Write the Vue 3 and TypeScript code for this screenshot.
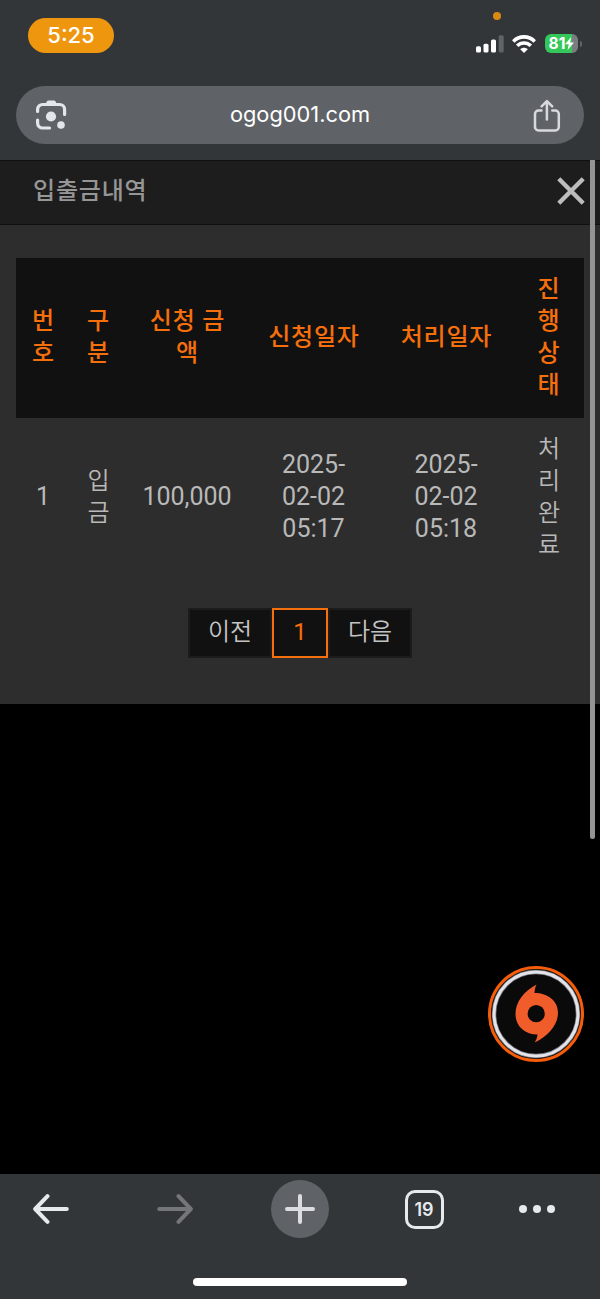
<script setup lang="ts">
interface Cell {
  lines: string[]
  hangul?: boolean
}

const columns: Cell[] = [
  { lines: ['번', '호'] },
  { lines: ['구', '분'] },
  { lines: ['신청 금', '액'] },
  { lines: ['신청일자'] },
  { lines: ['처리일자'] },
  { lines: ['진', '행', '상', '태'] },
]

const rows: Cell[][] = [
  [
    { lines: ['1'] },
    { lines: ['입', '금'], hangul: true },
    { lines: ['100,000'] },
    { lines: ['2025-', '02-02', '05:17'] },
    { lines: ['2025-', '02-02', '05:18'] },
    { lines: ['처', '리', '완', '료'], hangul: true },
  ],
]

const openTabs = 19
</script>

<template>
  <div class="screen">
    <header class="browser-top">
      <div class="status">
        <div class="clock">5:25</div>
        <span class="mic-dot"></span>
        <div class="status-icons">
          <svg class="signal" width="28" height="18" viewBox="0 0 28 18">
            <rect x="0" y="11.3" width="5" height="6.2" rx="1.6" fill="#fff" />
            <rect x="7.5" y="8.7" width="5" height="8.8" rx="1.6" fill="#fff" />
            <rect x="15" y="4.5" width="5" height="13" rx="1.6" fill="#fff" />
            <rect x="22.7" y="0.2" width="5" height="17.3" rx="1.6" fill="#616466" />
          </svg>
          <svg class="wifi" width="24" height="18" viewBox="0 0 24 18">
            <g fill="none" stroke="#fff" stroke-width="3.6">
              <path d="M1.3 6.4C7.3.4 16.7.4 22.7 6.4" />
              <path d="M5.2 10.8C9 7 15 7 18.8 10.8" />
            </g>
            <path d="M12 18l-3.8-3.8c2.1-2 5.5-2 7.6 0z" fill="#fff" />
          </svg>
          <div class="battery">
            <span class="battery-level">81</span>
            <svg width="9" height="13" viewBox="0 0 9 13">
              <path d="M6.2 0L0 7.3h3.7L2.6 13 9 5.5H5.2z" fill="#fff" />
            </svg>
          </div>
          <span class="battery-cap"></span>
        </div>
      </div>
      <div class="address">
        <svg class="lens" width="32" height="32" viewBox="0 0 32 32">
          <g fill="none" stroke="#e3e6ea" stroke-width="3.2" stroke-linecap="round">
            <path d="M2.6 12.4V10.5a5 5 0 0 1 5-5h17a5 5 0 0 1 5 5v5" />
            <path d="M2.6 21v3a5 5 0 0 0 5 5h7" />
          </g>
          <path d="M10 6l1.8-3.4a2 2 0 0 1 1.8-1.1h5.2a2 2 0 0 1 1.8 1.1L22.2 6z" fill="#e3e6ea" />
          <circle cx="16" cy="17.5" r="5.1" fill="#e3e6ea" />
          <circle cx="26" cy="26" r="3.8" fill="#e3e6ea" />
        </svg>
        <span class="url">ogog001.com</span>
        <svg class="share" width="28" height="34" viewBox="0 0 28 34">
          <g fill="none" stroke="#d8d9de" stroke-width="2.5" stroke-linecap="round" stroke-linejoin="round">
            <path d="M8.5 11.5H5.5a3.5 3.5 0 0 0-3.5 3.5v13a3.5 3.5 0 0 0 3.5 3.5h16.8a3.5 3.5 0 0 0 3.5-3.5V15a3.5 3.5 0 0 0-3.5-3.5h-3" />
            <path d="M13.9 20.5V2.5M8.6 7.4l5.3-5.3 5.3 5.3" />
          </g>
        </svg>
      </div>
    </header>

    <main class="page">
      <section class="panel">
        <div class="panel-head">
          <h1>입출금내역</h1>
          <svg class="close" width="28" height="28" viewBox="0 0 28 28">
            <path d="M1.8 1.8l24.4 24.4M26.2 1.8L1.8 26.2" stroke="#bdbdbd" stroke-width="4.4" />
          </svg>
        </div>
        <div class="panel-body">
          <table>
            <colgroup>
              <col class="c-no" />
              <col class="c-kind" />
              <col class="c-amount" />
              <col class="c-asked" />
              <col class="c-done" />
              <col class="c-state" />
            </colgroup>
            <thead>
              <tr>
                <th v-for="(col, i) in columns" :key="i">
                  <span v-for="(line, j) in col.lines" :key="j" class="line">{{ line }}</span>
                </th>
              </tr>
            </thead>
            <tbody>
              <tr v-for="(row, r) in rows" :key="r">
                <td v-for="(cell, i) in row" :key="i" :class="{ hangul: cell.hangul }">
                  <span v-for="(line, j) in cell.lines" :key="j" class="line">{{ line }}</span>
                </td>
              </tr>
            </tbody>
          </table>
          <nav class="pager">
            <a class="page-link prev">이전</a>
            <a class="page-link current">1</a>
            <a class="page-link next">다음</a>
          </nav>
        </div>
      </section>
      <div class="scrollbar"></div>
      <div class="float-button">
        <svg width="96" height="96" viewBox="0 0 96 96">
          <circle cx="48" cy="48" r="46.5" fill="#0a0a0b" stroke="#f55d0a" stroke-width="3" />
          <circle cx="48" cy="48" r="42" fill="none" stroke="#77777f" stroke-width="4.5" />
          <circle cx="48" cy="48" r="42" fill="none" stroke="#e3e3ea" stroke-width="3" />
          <path d="M48.5 18.5C36 25 27.5 36 27.5 48c0 12 9 20.5 22 20.5-.2 3-1.2 5.500-2.800 8C60 70 70 59.500 70 46.500 70 35 60 27 46.500 27c.2-3 .7-6 2-8.500z" fill="#f15d2a" />
          <circle cx="48.2" cy="47.7" r="8.6" fill="#0a0a0b" />
        </svg>
      </div>
    </main>

    <footer class="toolbar">
      <div class="tools">
        <div class="tool">
          <svg width="36" height="30" viewBox="0 0 36 30">
            <path d="M33.8 15H2.5M14.5 2.2L2.2 15l12.3 12.8" fill="none" stroke="#e6e9ed" stroke-width="4" stroke-linecap="round" stroke-linejoin="round" />
          </svg>
        </div>
        <div class="tool">
          <svg width="36" height="30" viewBox="0 0 36 30">
            <path d="M2.2 15h31.3M21.5 2.2L33.8 15 21.5 27.8" fill="none" stroke="#747677" stroke-width="4" stroke-linecap="round" stroke-linejoin="round" />
          </svg>
        </div>
        <div class="tool">
          <div class="new-tab">
            <svg width="30" height="30" viewBox="0 0 30 30">
              <path d="M15 2v26M2 15h26" stroke="#dcdde3" stroke-width="4" stroke-linecap="round" />
            </svg>
          </div>
        </div>
        <div class="tool">
          <div class="tab-count">{{ openTabs }}</div>
        </div>
        <div class="tool more">
          <svg width="36" height="8" viewBox="0 0 36 8">
            <g fill="#e6e9ed">
              <circle cx="4" cy="4" r="4" />
              <circle cx="18" cy="4" r="4" />
              <circle cx="32" cy="4" r="4" />
            </g>
          </svg>
        </div>
      </div>
      <div class="home-bar"></div>
    </footer>
  </div>
</template>

<style>
body {
  background: #000;
}
</style>

<style scoped>
* {
  box-sizing: border-box;
}

.screen {
  width: 600px;
  height: 1299px;
  display: flex;
  flex-direction: column;
  overflow: hidden;
  background: #000;
  font-family: Roboto, "Noto Sans CJK KR", sans-serif;
}

svg {
  display: block;
  flex: none;
}

.browser-top {
  height: 160px;
  flex: none;
  background: #333638;
}

.status {
  position: relative;
  height: 86px;
  padding: 18px 18px 0 28px;
  display: flex;
  justify-content: space-between;
  align-items: flex-start;
}

.clock {
  width: 86px;
  height: 35px;
  border-radius: 18px;
  background: #ef960f;
  color: #fff;
  font: 450 22px/35px Inter, sans-serif;
  text-align: center;
}

.mic-dot {
  position: absolute;
  left: 493px;
  top: 12px;
  width: 8px;
  height: 8px;
  border-radius: 50%;
  background: #d98a13;
}

.status-icons {
  display: flex;
  align-items: center;
  padding-top: 16px;
}

.wifi {
  margin: 0 9px 0 8px;
}

.battery {
  width: 33px;
  height: 19px;
  border-radius: 6px;
  display: flex;
  align-items: center;
  justify-content: center;
  background: linear-gradient(90deg, #34c759 27px, #7b7c7f 27px);
}

.battery-level {
  color: #fff;
  font: 700 15.5px/19px Inter, sans-serif;
}

.battery-cap {
  width: 2px;
  height: 6px;
  margin-left: 2px;
  border-radius: 0 2px 2px 0;
  background: #616466;
}

.address {
  height: 58px;
  margin: 0 16px;
  padding: 0 23px 0 19px;
  border-radius: 29px;
  display: flex;
  align-items: center;
  justify-content: space-between;
  background: #5f6368;
}

.share {
  margin-top: 2px;
}

.url {
  height: 58px;
  color: #fff;
  font: 400 21.8px/56px Inter, sans-serif;
}

.page {
  position: relative;
  flex: 1;
  background: #000;
}

.panel {
  height: 544px;
  background: #2d2d2d;
}

.panel-head {
  height: 65px;
  padding: 0 15px 0 33px;
  display: flex;
  justify-content: space-between;
  align-items: center;
  border-top: 1px solid #101010;
  border-bottom: 1px solid #101010;
  background: #1d1d1d;
}

h1 {
  margin: 0 0 4px;
  color: #969696;
  font-size: 24px;
  font-weight: 500;
  line-height: 32px;
  letter-spacing: 0.8px;
}

.close {
  margin-top: -4px;
}

.panel-body {
  padding: 33px 16px 0;
}

table {
  width: 568px;
  table-layout: fixed;
  border-collapse: collapse;
}

.c-no { width: 54px; }
.c-kind { width: 56px; }
.c-amount { width: 122px; }
.c-asked { width: 131px; }
.c-done { width: 134px; }
.c-state { width: 71px; }

th,
td {
  height: 160px;
  padding: 0 0 3px;
  text-align: center;
  vertical-align: middle;
}

th {
  padding-left: 1px;
  background: #111;
  color: #f56f0c;
  font-size: 24px;
  font-weight: 500;
  letter-spacing: 0.8px;
}

td {
  color: #b9b9b9;
  font-size: 25px;
  font-weight: 400;
}

td.hangul {
  padding-left: 1px;
  font-size: 24px;
  font-weight: 350;
}

.line {
  display: block;
  height: 32px;
  line-height: 32px;
  white-space: nowrap;
}

.pager {
  margin-top: 30px;
  display: flex;
  justify-content: center;
}

.page-link {
  height: 50px;
  border: 2px solid #1c1c1c;
  background: #111;
  color: #c4c4c4;
  font-size: 24px;
  font-weight: 350;
  line-height: 45px;
  text-align: center;
}

.prev,
.next {
  width: 84px;
}

.current {
  width: 56px;
  border-color: #f56f0c;
  color: #f56f0c;
  font-weight: 400;
}

.scrollbar {
  position: absolute;
  top: 0;
  right: 5px;
  width: 5px;
  height: 679px;
  border-radius: 0 0 3px 3px;
  background: #949494;
}

.float-button {
  position: absolute;
  left: 488px;
  top: 806px;
}

.toolbar {
  height: 125px;
  flex: none;
  background: #333638;
}

.tools {
  height: 70px;
  padding: 0 1px 0 0;
  display: grid;
  grid-template-columns: 102px 146px 104px 144px 1fr;
  align-items: center;
}

.tool {
  display: flex;
  justify-content: center;
}

.more {
  padding-right: 21px;
}

.new-tab {
  width: 58px;
  height: 58px;
  border-radius: 50%;
  display: flex;
  align-items: center;
  justify-content: center;
  background: #5f6368;
}

.tab-count {
  width: 39px;
  height: 39px;
  border: 3px solid #e6e9ed;
  border-radius: 10px;
  color: #e6e9ed;
  font: 600 18px/34px Inter, sans-serif;
  text-align: center;
}

.home-bar {
  width: 214px;
  height: 8px;
  margin: 34px auto 0;
  border-radius: 4px;
  background: #fff;
}
</style>
